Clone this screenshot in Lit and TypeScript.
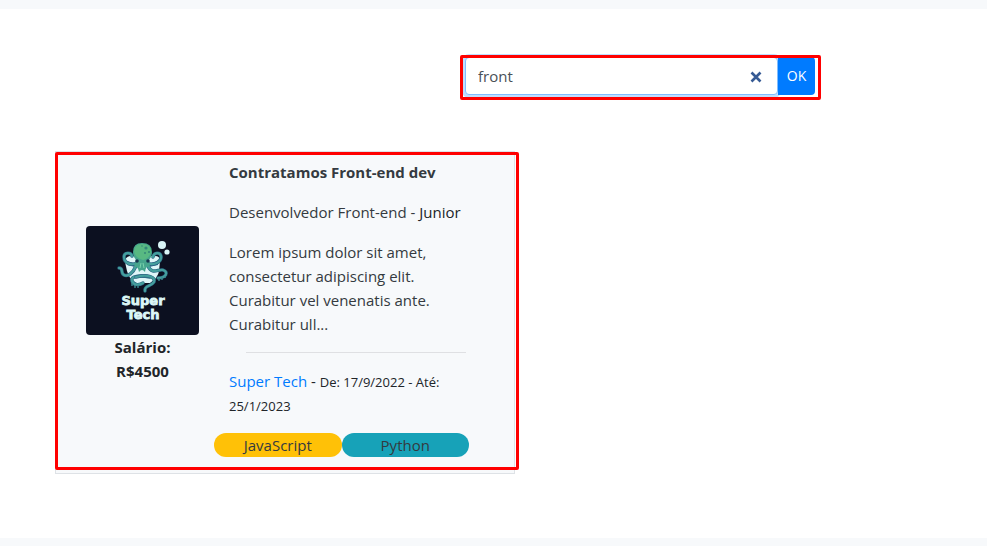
import { LitElement, html, css, svg } from "lit";
import { customElement, property, state } from "lit/decorators.js";

const base = css`
  *, *::before, *::after { box-sizing: border-box; }
  p, h2 { margin: 0; font-size: 16px; }
`;

const bag = "M44 30 Q39 31 39 36 L41 45 Q43 53 50 57 L64 57 Q72 52 73 45 L74 35 Q74 30 69 30 Z";
const arms = [
  "M51 37 C45 40 38 37 38 31 C38 26 45 26 46 30",
  "M61 37 C68 40 76 36 75 30 C74 26 68 26 67 31",
  "M50 40 C47 47 42 51 38 49 C34 47 38 42 33 42",
  "M62 40 C66 49 72 43 77 44 C83 46 80 52 72 52",
  "M64 51 C54 49 44 50 46 55 C48 60 54 59 57 57",
  "M50 51 C62 48 70 51 68 56 C65 61 58 59 59 65",
];

@customElement("company-logo")
export class CompanyLogo extends LitElement {
  static styles = css`
    :host { display: block; }
    .logo { display: block; width: 100%; border-radius: 4px; }
    .name { font: bold 13px "DejaVu Sans", sans-serif; fill: #dcf7f7; stroke: #dcf7f7; stroke-width: 0.8; text-anchor: middle; }
  `;
  render() {
    return html`<svg class="logo" viewBox="0 0 113 109" role="img" aria-label="Super Tech">
      <rect width="113" height="109" fill="#0c1020" />
      <path d=${bag} fill="#dff6f8" />
      <path d="M41 35 L51 38 L49 41 L41 39 Z M72 35 L61 38 L63 41 L72 39 Z" fill="#285b86" />
      <g fill="none" stroke-linecap="round">
        ${arms.map((d) => svg`<path d=${d} stroke="#2b6783" stroke-width="3.4" /><path d=${d} stroke="#459f9d" stroke-width="2.2" />`)}
      </g>
      <path d="M47 26 Q47 17 56 17 Q66 17 66 26 Q66 31 63 34 L64 41 Q60 39 59 46 Q56 42 53 46 Q52 40 48 41 L50 34 Q47 31 47 26 Z" fill="#46a58c" />
      <path d="M48 25 Q49 18 56 18 Q65 18 65 26 Q63 33 57 34 Q49 32 48 25 Z" fill="#58b982" />
      <g fill="#348879"><circle cx="60" cy="22" r="1.6" /><circle cx="63" cy="26" r="1.1" /><circle cx="59" cy="27" r="1" /><circle cx="56" cy="20" r="0.8" /></g>
      <g fill="#15344e"><circle cx="51" cy="35" r="1.8" /><circle cx="62" cy="35" r="1.8" /></g>
      <path d="M54 42 L55 37 M58 42 L57 37" stroke="#7bd3ad" stroke-width="1" />
      <path d="M46 57 v3 M49 59 v3 M52 59 v3 M73 52 v3 M76 51 v3 M79 50 v2" stroke="#3c8b91" stroke-width="1.4" />
      <g fill="#d9f5f7"><circle cx="76" cy="19" r="4" /><circle cx="81" cy="26" r="2.6" /></g>
      <text class="name"><tspan x="57" y="79">Super</tspan><tspan x="57" y="93">Tech</tspan></text>
    </svg>`;
  }
}

@customElement("search-box")
export class SearchBox extends LitElement {
  @state() private term = "front";
  static styles = [base, css`
    .search { position: relative; display: flex; width: 350px; max-width: 100%; height: 38px; }
    .search::after { content: ""; position: absolute; inset: -2px -6px -5px -5px; border: 3px solid #f00; border-radius: 2px; pointer-events: none; }
    .field { position: relative; flex: 1; min-width: 0; }
    .input {
      width: 100%; height: 100%; padding: 0 40px 0 12px; border: 1px solid #80bdff; border-radius: 4px;
      box-shadow: 0 0 0 3px #bfdeff; color: #495057; background: #fff; outline: 0;
      font: 15px/24px "Open Sans", "Noto Sans", sans-serif;
    }
    .clear { position: absolute; top: 12px; right: 14px; width: 16px; height: 16px; padding: 0; border: 0; background: none; }
    .cross { display: block; width: 16px; height: 16px; }
    .ok {
      position: relative; width: 37px; padding: 0; border: 0; border-radius: 0 4px 4px 0;
      background: #007bff; color: #fff; font: 14px/20px "Open Sans", "Noto Sans", sans-serif;
    }
  `];
  render() {
    return html`<form class="search" role="search" @submit=${(e: Event) => e.preventDefault()}>
      <div class="field">
        <input class="input" aria-label="Buscar vagas" .value=${this.term}
          @input=${(e: Event) => (this.term = (e.target as HTMLInputElement).value)} />
        <button class="clear" type="button" aria-label="Limpar" @click=${() => (this.term = "")}>
          <svg class="cross" viewBox="0 0 16 16"><path d="M3.5 3.5 L12.5 12.5 M12.5 3.5 L3.5 12.5" stroke="#365a94" stroke-width="2.6" /></svg>
        </button>
      </div>
      <button class="ok" type="submit">OK</button>
    </form>`;
  }
}

interface Job {
  title: string; role: string; level: string; text: string; salary: string;
  company: string; from: string; to: string; tags: { name: string; tone: string }[];
}

@customElement("job-card")
export class JobCard extends LitElement {
  @property({ attribute: false }) job!: Job;
  static styles = [base, css`
    :host { display: block; }
    .card {
      position: relative; display: flex; padding: 8px 30px 16px; border: 1px solid #dee2e6;
      background: #f7f9fb; color: #343a40; font: 15px/24px "Open Sans", "Noto Sans", sans-serif;
    }
    .card::after { content: ""; position: absolute; inset: 0 -5px 3px -1px; border: 3px solid #f00; border-radius: 2px; pointer-events: none; }
    .side { width: 113px; flex: none; align-self: center; padding-bottom: 8px; text-align: center; color: #212529; font-weight: bold; }
    .salary { padding: 0 15px; font-size: 15px; }
    .body { display: flex; flex-direction: column; gap: 16px; flex: 1; min-width: 0; margin: 0 15px 0 30px; }
    .title { font-size: 15px; font-weight: bold; }
    .text { font-size: 15px; }
    .dark { color: #212529; }
    .line { width: 220px; max-width: 100%; height: 1px; margin: 0 0 0 17px; border: 0; background: #dfe0e3; }
    .link { color: #007bff; text-decoration: none; }
    .dates { font-size: 13px; line-height: 16px; }
    .tags { display: flex; margin: 0 0 0 -15px; padding: 0; list-style: none; }
    .tag { flex: 1; border-radius: 12px; text-align: center; }
    .warning { background: #ffc107; }
    .info { background: #17a2b8; }
  `];
  render() {
    const j = this.job;
    return html`<article class="card">
      <div class="side">
        <company-logo></company-logo>
        <p class="salary">Salário: ${j.salary}</p>
      </div>
      <div class="body">
        <h2 class="title">${j.title}</h2>
        <p class="text">${j.role} - <span class="dark">${j.level}</span></p>
        <p class="text">${j.text}</p>
        <hr class="line" />
        <p class="text dark"><a class="link" href="#">${j.company}</a> - <span class="dates">De: ${j.from} - Até: ${j.to}</span></p>
        <ul class="tags">${j.tags.map((t) => html`<li class="tag ${t.tone}">${t.name}</li>`)}</ul>
      </div>
    </article>`;
  }
}

@customElement("app-root")
export class AppRoot extends LitElement {
  private jobs: Job[] = [{
    title: "Contratamos Front-end dev", role: "Desenvolvedor Front-end", level: "Junior",
    text: "Lorem ipsum dolor sit amet, consectetur adipiscing elit. Curabitur vel venenatis ante. Curabitur ull...",
    salary: "R$4500", company: "Super Tech", from: "17/9/2022", to: "25/1/2023",
    tags: [{ name: "JavaScript", tone: "warning" }, { name: "Python", tone: "info" }],
  }];
  static styles = [base, css`
    :host { display: flex; flex-direction: column; min-height: 100vh; background: #f7f9fb; }
    .page { flex: 1; margin: 9px 0 8px; padding: 48px 55px 64px; background: #fff; }
    .top { display: flex; justify-content: flex-end; margin-bottom: 56px; padding-right: 117px; }
    .jobs { display: grid; grid-template-columns: repeat(auto-fill, minmax(min(100%, 460px), 460px)); }
  `];
  render() {
    return html`<main class="page">
      <div class="top"><search-box></search-box></div>
      <section class="jobs">${this.jobs.map((j) => html`<job-card .job=${j}></job-card>`)}</section>
    </main>`;
  }
}
